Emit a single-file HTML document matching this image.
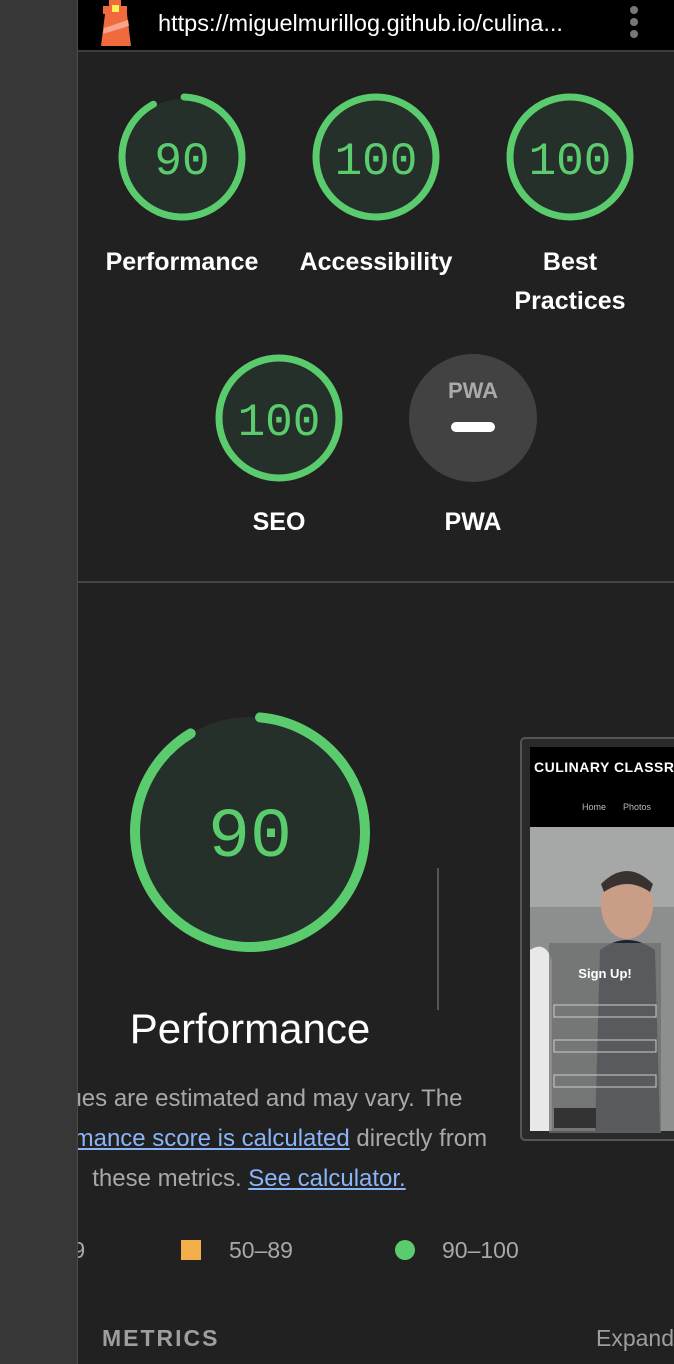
<!DOCTYPE html>
<html><head><meta charset="utf-8"><style>
*{margin:0;padding:0;box-sizing:border-box}
body{width:674px;height:1364px;background:#212121;font-family:"Liberation Sans",sans-serif;position:relative;overflow:hidden}
.left{position:absolute;left:0;top:0;width:78px;height:1364px;background:#373737;border-right:1px solid #4a4a4a}
.top{position:absolute;left:78px;top:0;width:596px;height:52px;background:#000;border-bottom:2px solid #3c3c3c}
.main{position:absolute;left:78px;top:0;width:596px;height:1364px;overflow:hidden}
.a{position:absolute}
.lbl{position:absolute;color:#fff;font-size:25px;font-weight:bold;text-align:center;width:220px;line-height:39px}
.num{font-family:"Liberation Mono",monospace;fill:#5bcc6e}
.p{position:absolute;color:#a8a8a8;font-size:24px;white-space:nowrap;line-height:40px}
.p a{color:#8ab4f8;text-decoration:underline}
</style></head><body>
<div class="left"></div>
<div class="top">
<svg class="a" style="left:22px;top:0" width="34" height="48" viewBox="0 0 34 48">
<path d="M9 0h12v6h6v8H3V6h6z" fill="#f06a3e"/><rect x="12" y="5" width="7" height="7" fill="#ffee58"/>
<path d="M5 14h22l4 32H1z" fill="#f06a3e"/><path d="M4 28l24-8 1 6L3 34z" fill="#f6a48a"/></svg>
<div class="a" style="left:80px;top:8px;color:#fff;font-size:23.5px;line-height:30px">https://miguelmurillog.github.io/culina...</div>
<svg class="a" style="left:550px;top:4px" width="12" height="38"><circle cx="6" cy="6" r="4" fill="#777"/><circle cx="6" cy="18" r="4" fill="#777"/><circle cx="6" cy="30" r="4" fill="#777"/></svg>
</div>
<svg class="a" style="left:78px;top:0" width="596" height="1364" viewBox="78 0 596 1364">
<g fill="#26302a" stroke="#5bcc6e" stroke-width="7">
<circle cx="182" cy="157" r="58" fill="#26302a" stroke="none"/>
<circle cx="182" cy="157" r="60" fill="none" stroke-dasharray="345 32" stroke-linecap="round" transform="rotate(-88 182 157)"/>
<circle cx="376" cy="157" r="60"/>
<circle cx="570" cy="157" r="60"/>
<circle cx="279" cy="418" r="60"/>
</g>
<circle cx="473" cy="418" r="64" fill="#424242"/>
<text x="473" y="398" text-anchor="middle" font-family="Liberation Sans" font-weight="bold" font-size="22" fill="#aaa">PWA</text>
<rect x="451" y="422" width="44" height="10" rx="5" fill="#fff"/>
<text class="num" x="182" y="174" text-anchor="middle" font-size="46">90</text>
<text class="num" x="376" y="174" text-anchor="middle" font-size="46">100</text>
<text class="num" x="570" y="174" text-anchor="middle" font-size="46">100</text>
<text class="num" x="279" y="435" text-anchor="middle" font-size="46">100</text>
<line x1="78" y1="582" x2="674" y2="582" stroke="#444" stroke-width="2"/>
<circle cx="250" cy="832" r="115" fill="#26302a"/>
<circle cx="250" cy="832" r="115" fill="none" stroke="#5bcc6e" stroke-width="10" stroke-dasharray="650 73" stroke-linecap="round" transform="rotate(-85 250 832)"/>
<text class="num" x="250" y="856" text-anchor="middle" font-size="70">90</text>
<line x1="438" y1="868" x2="438" y2="1010" stroke="#555" stroke-width="2"/>
<rect x="521" y="738" width="160" height="402" rx="4" fill="#2a2a2a" stroke="#555" stroke-width="2"/>
<rect x="530" y="747" width="150" height="80" fill="#000"/>
<text x="534" y="772" font-family="Liberation Sans" font-weight="bold" font-size="14" fill="#fff" letter-spacing="0.5">CULINARY CLASSROOM</text>
<text x="582" y="810" font-family="Liberation Sans" font-size="9" fill="#bbb">Home</text>
<text x="623" y="810" font-family="Liberation Sans" font-size="9" fill="#bbb">Photos</text>
<rect x="530" y="827" width="150" height="304" fill="#8d8f8e"/>
<rect x="530" y="827" width="150" height="80" fill="#a6a8a7"/>
<path d="M530 950 Q545 940 552 960 L552 1131 L530 1131z" fill="#e8e8e8"/>
<ellipse cx="627" cy="905" rx="26" ry="34" fill="#c99d86"/>
<path d="M601 884 Q627 858 653 884 L650 892 Q627 876 604 892z" fill="#3a3230"/>
<path d="M595 1131 L600 950 Q627 930 655 950 L660 1131z" fill="#1d2133"/>
<rect x="549" y="943" width="112" height="190" fill="rgba(110,110,110,0.75)"/>
<text x="605" y="978" text-anchor="middle" font-family="Liberation Sans" font-weight="bold" font-size="13" fill="#fff">Sign Up!</text>
<g fill="none" stroke="#ccc" stroke-width="1"><rect x="554" y="1005" width="102" height="12"/><rect x="554" y="1040" width="102" height="12"/><rect x="554" y="1075" width="102" height="12"/></g>
<rect x="554" y="1108" width="42" height="20" fill="#333"/>
<circle cx="405" cy="1250" r="10" fill="#5bcc6e"/>
<rect x="181" y="1240" width="20" height="20" fill="#f4af4a"/>
</svg>
<div class="lbl" style="left:72px;top:243px">Performance</div>
<div class="lbl" style="left:266px;top:243px">Accessibility</div>
<div class="lbl" style="left:460px;top:243px">Best<br>Practices</div>
<div class="lbl" style="left:169px;top:503px">SEO</div>
<div class="lbl" style="left:363px;top:503px">PWA</div>
<div class="a" style="left:50px;top:1005px;width:400px;text-align:center;color:#fff;font-size:42px">Performance</div>
<div class="main">
<div class="p" style="left:-129px;top:1079px;text-align:center;width:600px">Values are estimated and may vary. The</div>
<div class="p" style="left:-129px;top:1119px;text-align:center;width:600px"><a>performance score is calculated</a> directly from</div>
<div class="p" style="left:-129px;top:1159px;text-align:center;width:600px">these metrics. <a>See calculator.</a></div>
<div class="p" style="left:-44px;top:1230px;font-size:23px">0–49</div>
<div class="p" style="left:151px;top:1230px;font-size:23px">50–89</div>
<div class="p" style="left:364px;top:1230px;font-size:23px">90–100</div>
<div class="p" style="left:24px;top:1318px;font-weight:bold;letter-spacing:2px;color:#9e9e9e;font-size:23px">METRICS</div>
<div class="p" style="left:518px;top:1318px;color:#9e9e9e;font-size:23px">Expand view</div>
</div>
</body></html>
